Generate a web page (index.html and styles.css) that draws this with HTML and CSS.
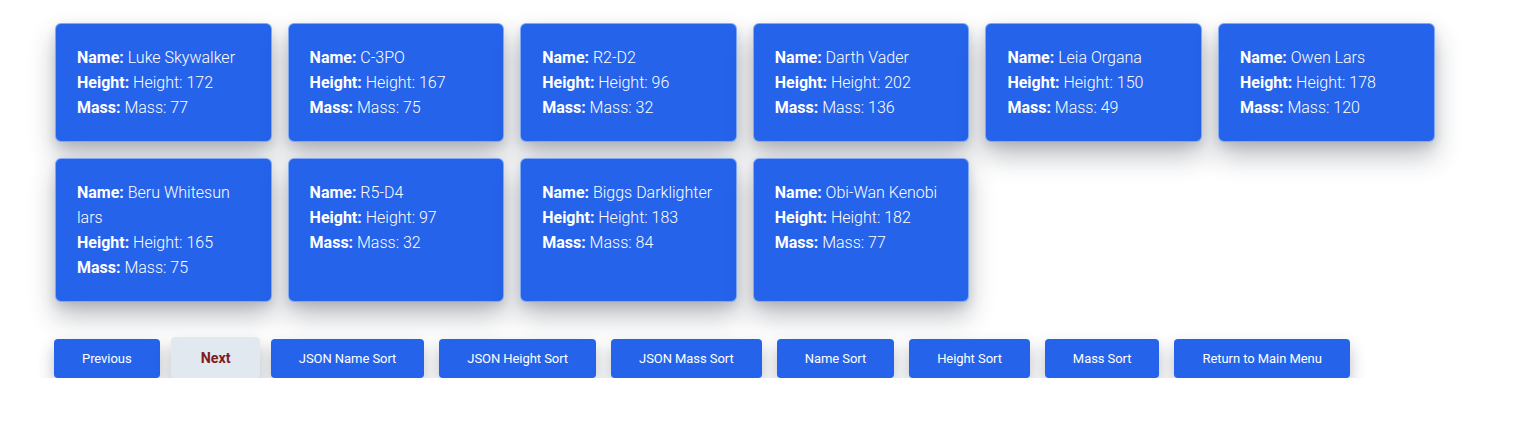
FILE: index.html
```html
<!DOCTYPE html>
<html lang="en">
<head>
<meta charset="utf-8">
<title>Characters</title>
<link rel="stylesheet" href="styles.css">
</head>
<body>
<main class="page">
  <section class="cards">
    <div class="card"><p><b>Name:</b> Luke Skywalker</p><p><b>Height:</b> Height: 172</p><p><b>Mass:</b> Mass: 77</p></div>
    <div class="card"><p><b>Name:</b> C-3PO</p><p><b>Height:</b> Height: 167</p><p><b>Mass:</b> Mass: 75</p></div>
    <div class="card"><p><b>Name:</b> R2-D2</p><p><b>Height:</b> Height: 96</p><p><b>Mass:</b> Mass: 32</p></div>
    <div class="card"><p><b>Name:</b> Darth Vader</p><p><b>Height:</b> Height: 202</p><p><b>Mass:</b> Mass: 136</p></div>
    <div class="card"><p><b>Name:</b> Leia Organa</p><p><b>Height:</b> Height: 150</p><p><b>Mass:</b> Mass: 49</p></div>
    <div class="card"><p><b>Name:</b> Owen Lars</p><p><b>Height:</b> Height: 178</p><p><b>Mass:</b> Mass: 120</p></div>
    <div class="card"><p><b>Name:</b> Beru Whitesun lars</p><p><b>Height:</b> Height: 165</p><p><b>Mass:</b> Mass: 75</p></div>
    <div class="card"><p><b>Name:</b> R5-D4</p><p><b>Height:</b> Height: 97</p><p><b>Mass:</b> Mass: 32</p></div>
    <div class="card"><p><b>Name:</b> Biggs Darklighter</p><p><b>Height:</b> Height: 183</p><p><b>Mass:</b> Mass: 84</p></div>
    <div class="card"><p><b>Name:</b> Obi-Wan Kenobi</p><p><b>Height:</b> Height: 182</p><p><b>Mass:</b> Mass: 77</p></div>
  </section>
  <nav class="actions">
    <button class="btn">Previous</button>
    <button class="btn btn-active">Next</button>
    <button class="btn">JSON Name Sort</button>
    <button class="btn">JSON Height Sort</button>
    <button class="btn">JSON Mass Sort</button>
    <button class="btn">Name Sort</button>
    <button class="btn">Height Sort</button>
    <button class="btn">Mass Sort</button>
    <button class="btn">Return to Main Menu</button>
  </nav>
</main>
</body>
</html>
```
FILE: styles.css
```css
* { box-sizing: border-box; }
html, body { margin: 0; padding: 0; background: #ffffff; }
body { font-family: Roboto, "Liberation Sans", sans-serif; }

.page {
  padding: 23px 0 0 54px;
}

.cards {
  display: flex;
  flex-wrap: wrap;
  gap: 16px;
  width: 1400px;
  padding-left: 1px;
}

.card {
  width: 216.6px;
  background: #2563eb;
  color: #ffffff;
  border: 1px solid rgba(191, 219, 254, 0.6);
  border-radius: 6px;
  padding: 21px 21px;
  box-shadow: 0 14px 26px rgba(30, 41, 59, 0.3), 0 4px 10px rgba(30, 41, 59, 0.12);
}

.card p {
  margin: 0;
  font-size: 16px;
  line-height: 25px;
  font-weight: 300;
}

.card b { font-weight: 700; }

.actions {
  display: flex;
  gap: 15px;
  margin-top: 37px;
  align-items: center;
}

.btn {
  font-family: Roboto, "Liberation Sans", sans-serif;
  font-size: 13px;
  font-weight: 400;
  letter-spacing: -0.06px;
  line-height: 15px;
  color: #ffffff;
  background: #2563eb;
  border: none;
  border-radius: 4px;
  padding: 12px 28px;
  height: 39px;
  box-shadow: 0 8px 16px rgba(30, 41, 59, 0.3);
}

.btn-active {
  background: #e2e8f0;
  color: #7f1d1d;
  font-weight: 700;
  letter-spacing: 0;
  transform: scale(1.1);
  padding: 12px 27px;
  box-shadow: 0 8px 14px rgba(30, 41, 59, 0.3);
}
```
